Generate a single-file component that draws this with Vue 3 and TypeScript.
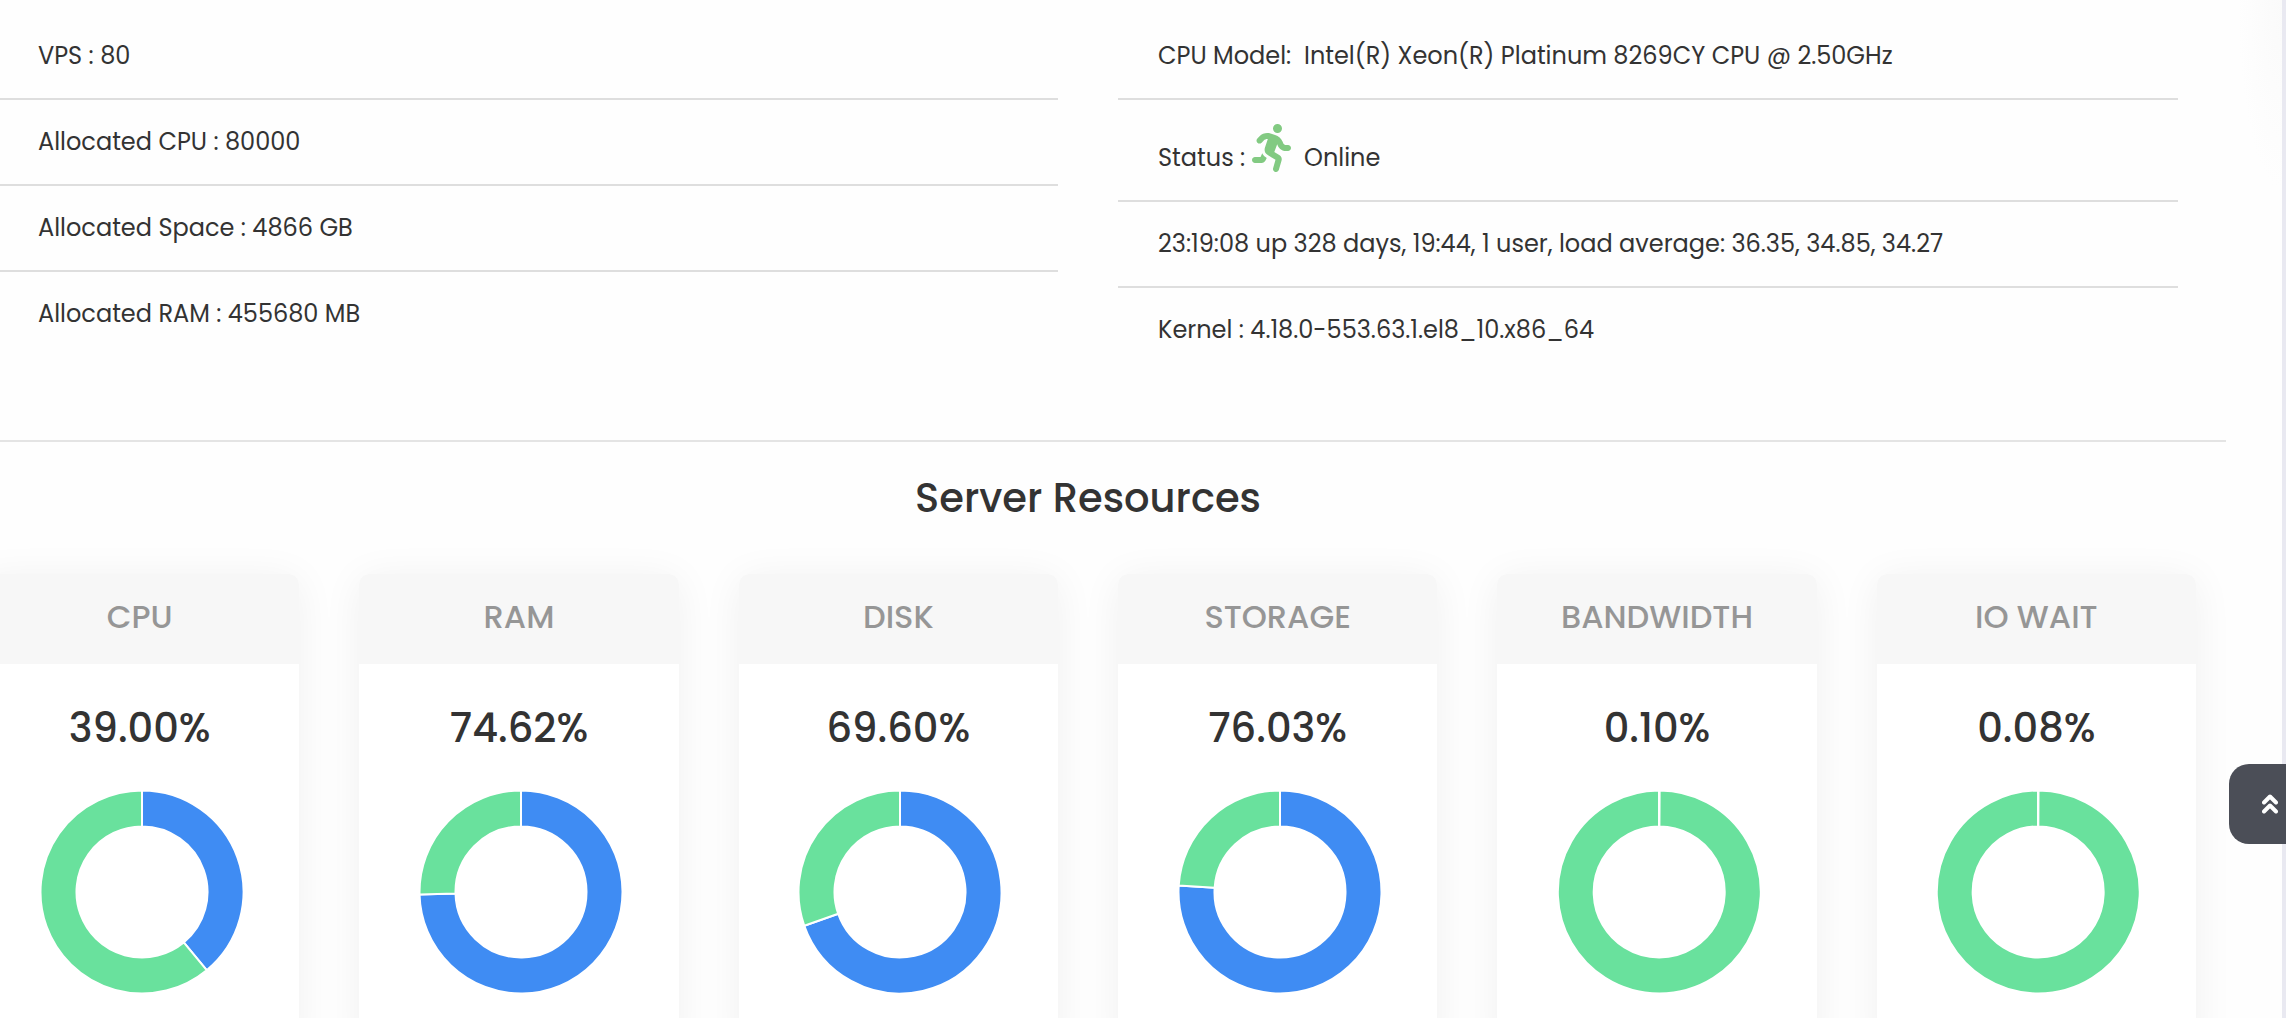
<script setup lang="ts">
interface Resource {
  name: string
  used: number
}

const allocation: string[] = [
  'VPS : 80',
  'Allocated CPU : 80000',
  'Allocated Space : 4866 GB',
  'Allocated RAM : 455680 MB',
]

const resources: Resource[] = [
  { name: 'CPU', used: 39 },
  { name: 'RAM', used: 74.62 },
  { name: 'DISK', used: 69.6 },
  { name: 'STORAGE', used: 76.03 },
  { name: 'BANDWIDTH', used: 0.1 },
  { name: 'IO WAIT', used: 0.08 },
]

const CX = 122
const CY = 102
const OUTER = 101.5
const INNER = 65.5

function point(radius: number, percent: number): string {
  const angle = (percent / 100) * Math.PI * 2
  return `${(CX + radius * Math.sin(angle)).toFixed(2)} ${(CY - radius * Math.cos(angle)).toFixed(2)}`
}

// Ring segment running clockwise between two percentages, starting at twelve o'clock
function segment(from: number, to: number): string {
  const large = to - from > 50 ? 1 : 0
  return [
    `M${point(OUTER, from)}`,
    `A${OUTER} ${OUTER} 0 ${large} 1 ${point(OUTER, to)}`,
    `L${point(INNER, to)}`,
    `A${INNER} ${INNER} 0 ${large} 0 ${point(INNER, from)}`,
    'Z',
  ].join(' ')
}
</script>

<template>
  <div class="page">
    <main class="panel">
      <section class="details">
        <ul class="list">
          <li v-for="line in allocation" :key="line">{{ line }}</li>
        </ul>
        <ul class="list">
          <li>CPU Model:&nbsp; Intel(R) Xeon(R) Platinum 8269CY CPU @ 2.50GHz</li>
          <li>
            Status :
            <svg class="runner" viewBox="0 0 448 512" aria-hidden="true">
              <path d="M320 48a48 48 0 1 0 -96 0 48 48 0 1 0 96 0zM125.7 175.5c9.9-9.9 23.4-15.5 37.5-15.5c1.9 0 3.8 .1 5.6 .3L137.6 254c-9.3 28 1.7 58.8 26.8 74.5l86.2 53.9-25.4 88.8c-4.9 17 5 34.7 22 39.6s34.7-5 39.6-22l28.7-100.4c5.9-20.6-2.6-42.6-20.7-53.9L238 299l30.9-82.4 5.1 12.3C289 264.7 323.9 288 362.7 288H384c17.7 0 32-14.3 32-32s-14.3-32-32-32H362.7c-12.9 0-24.6-7.8-29.5-19.7l-6.3-15c-14.6-35.1-44.1-61.9-80.5-73.1l-48.7-15c-11.1-3.4-22.7-5.2-34.4-5.2c-31 0-60.8 12.3-82.7 34.3L57.4 153.4c-12.5 12.5-12.5 32.8 0 45.3s32.8 12.5 45.3 0l23.1-23.1zM91.2 352H32c-17.7 0-32 14.3-32 32s14.3 32 32 32h69.6c19 0 36.2-11.2 43.9-28.5L157 361.6l-9.5-6c-17.5-10.9-30.5-26.8-37.9-44.9L91.2 352z" />
            </svg>
            Online
          </li>
          <li>23:19:08 up 328 days, 19:44, 1 user, load average: 36.35, 34.85, 34.27</li>
          <li>Kernel : 4.18.0-553.63.1.el8_10.x86_64</li>
        </ul>
      </section>

      <hr class="divider" />

      <section class="resources">
        <h2>Server Resources</h2>
        <div class="cards">
          <article v-for="item in resources" :key="item.name" class="card">
            <h3>{{ item.name }}</h3>
            <p class="value">{{ item.used.toFixed(2) }}%</p>
            <svg class="chart" viewBox="0 0 240 204" role="img" :aria-label="item.name + ' usage'">
              <path class="used" :d="segment(0, item.used)" />
              <path class="free" :d="segment(item.used, 100)" />
            </svg>
          </article>
        </div>
      </section>
    </main>

    <button class="to-top" type="button" aria-label="Back to top">
      <svg viewBox="0 0 16 20" aria-hidden="true">
        <path d="M2 8.500 8 2.500 14 8.500M2 17.500 8 11.500 14 17.500" />
      </svg>
    </button>
  </div>
</template>

<style>
body {
  margin: 0;
  background: #e9e9f1;
}
</style>

<style scoped>
.page {
  position: relative;
  height: 100vh;
  overflow: hidden;
  box-sizing: border-box;
  padding-right: 4px;
  color: #333;
  font-family: Poppins, Inter, "Noto Sans", sans-serif;
  font-size: 24px;
  line-height: 36px;
}

.panel {
  min-height: 100%;
  box-sizing: border-box;
  padding-top: 14px;
  background: radial-gradient(ellipse 44px 190px at 100% 0, #fafafa, #fefefe) #fefefe;
}

.details {
  display: grid;
  grid-template-columns: 1fr 1fr;
  gap: 60px;
  margin: 0 104px 68px -2px;
}

.list {
  margin: 0;
  padding: 0;
  list-style: none;
}

.list li {
  padding: 24px 40px;
  border-bottom: 2px solid #dedede;
}

.list li:last-child {
  border-bottom: 0;
}

.runner {
  width: 42px;
  height: 48px;
  margin-right: 4px;
  vertical-align: -6px;
  fill: #82ca82;
}

.divider {
  height: 2px;
  margin: 0 56px 26px 0;
  border: 0;
  background: #e4e4e4;
}

.resources {
  margin: 0 86px 0 -20px;
}

h2,
.value {
  margin: 0;
  font-size: 40px;
  font-weight: 500;
  line-height: 60px;
  text-align: center;
}

.cards {
  display: grid;
  grid-template-columns: repeat(6, 1fr);
  gap: 60px;
  margin-top: 46px;
}

.card {
  padding-bottom: 60px;
  border-radius: 10px;
  background: #fff;
  box-shadow: 0 4px 40px rgba(0, 0, 0, 0.06);
}

h3 {
  margin: 0 0 34px;
  padding: 19px 0 23px;
  border-radius: 10px 10px 0 0;
  background: #f7f7f7;
  color: #969696;
  font-size: 32px;
  font-weight: 500;
  line-height: 48px;
  text-align: center;
}

.chart {
  display: block;
  width: 240px;
  height: 204px;
  margin: 32px auto 0;
}

.chart path {
  stroke: #fff;
  stroke-width: 2px;
  stroke-linejoin: bevel;
}

.used {
  fill: #3f8cf3;
}

.free {
  fill: #69e19d;
}

.to-top {
  position: absolute;
  top: 764px;
  right: 0;
  display: flex;
  align-items: center;
  width: 57px;
  height: 80px;
  padding: 0 0 0 33px;
  border: 0;
  border-radius: 20px 0 0 20px;
  background: #4b4e57;
}

.to-top svg {
  width: 16px;
  height: 20px;
  fill: none;
  stroke: #fff;
  stroke-width: 4px;
  stroke-linecap: round;
  stroke-linejoin: round;
}
</style>
